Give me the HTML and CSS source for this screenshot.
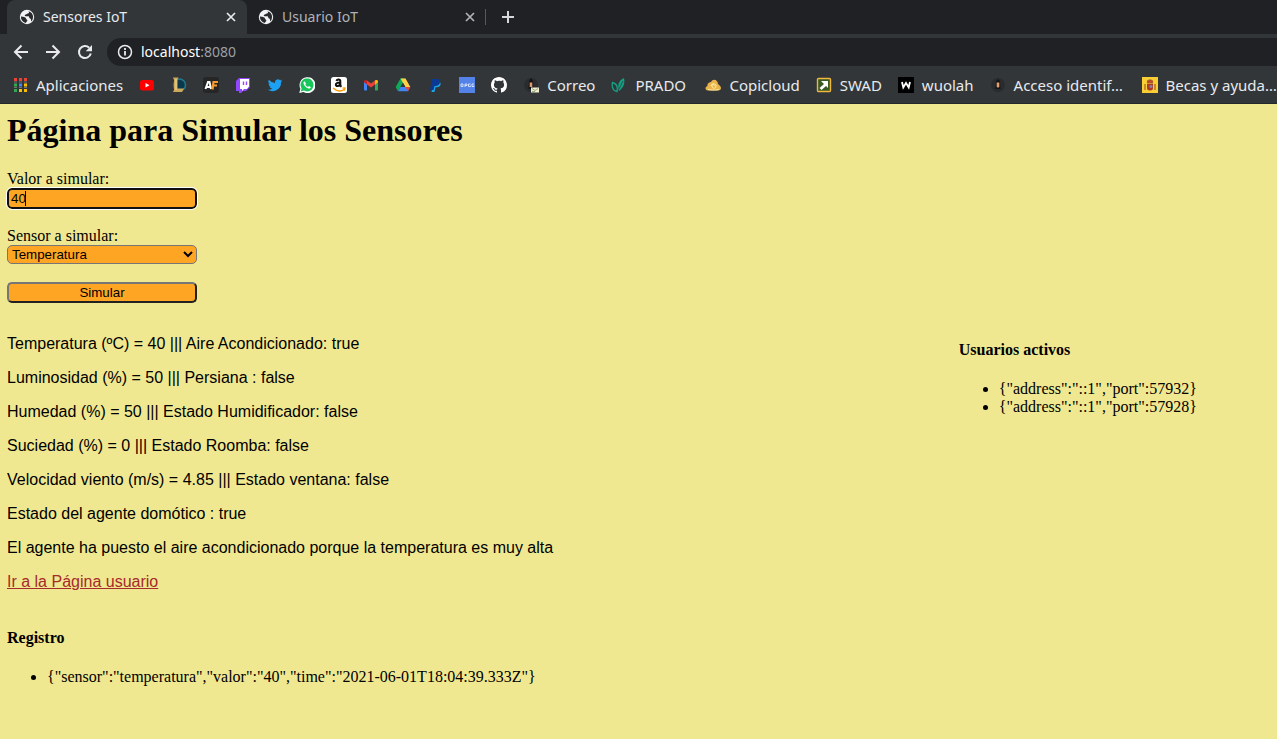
FILE: index.html
```html
<!DOCTYPE html>
<html lang="es">
<head>
<meta charset="utf-8">
<title>Sensores IoT</title>
<link rel="stylesheet" href="styles.css">
</head>
<body>
<svg class="defs" aria-hidden="true">
  <symbol id="globe" viewBox="0 0 16 16">
    <circle cx="8" cy="8" r="7.200" fill="#f1f3f4"/>
    <path d="M9.300 2.200C10.500 3 10.300 4.200 8.800 4.400 7.600 4.500 7.600 5.400 6.600 5.600 5.300 5.900 5.500 7.300 6.800 7.300H9C10 7.300 10.200 8 10.300 8.800 10.500 9.700 12 9.500 12 10.500V12.600A6.200 6.200 0 0 0 14.100 8 6.200 6.200 0 0 0 9.300 2.200zM1.900 7.600C3.600 7.900 6.800 8 7 9.500 7.100 10.700 8.600 10.400 8.300 11.700 8 12.800 7 12.700 7 14A6.200 6.200 0 0 1 1.900 7.600z" fill="#292a2d"/>
  </symbol>
  <symbol id="close" viewBox="0 0 16 16"><path d="M4 4l8 8M12 4l-8 8" fill="none" stroke="currentColor" stroke-width="1.700"/></symbol>
</svg>
<header class="browser">
  <nav class="tabs" aria-label="Pestañas">
    <div class="tab tab-active">
      <svg class="icon"><use href="#globe"/></svg>
      <span class="tab-title">Sensores IoT</span>
      <button class="tool" aria-label="Cerrar Sensores IoT"><svg class="icon"><use href="#close"/></svg></button>
    </div>
    <div class="tab">
      <svg class="icon"><use href="#globe"/></svg>
      <span class="tab-title">Usuario IoT</span>
      <button class="tool" aria-label="Cerrar Usuario IoT"><svg class="icon"><use href="#close"/></svg></button>
    </div>
    <button class="tool new-tab" aria-label="Nueva pestaña"><svg class="icon" viewBox="0 0 16 16"><path d="M8 2v12M2 8h12" stroke="currentColor" stroke-width="2"/></svg></button>
  </nav>
  <div class="toolbar">
    <button class="tool" aria-label="Atrás"><svg class="icon" viewBox="0 0 16 16"><path d="M15 8H2M8.500 1.500L2 8l6.500 6.500" fill="none" stroke="currentColor" stroke-width="2"/></svg></button>
    <button class="tool" aria-label="Adelante"><svg class="icon" viewBox="0 0 16 16"><path d="M1 8h13M7.500 1.500L14 8l-6.500 6.500" fill="none" stroke="currentColor" stroke-width="2"/></svg></button>
    <button class="tool" aria-label="Recargar"><svg class="icon" viewBox="0 0 16 16"><path d="M13.800 9.500A6 6 0 1 1 12.200 3.800" fill="none" stroke="currentColor" stroke-width="2"/><path d="M15 1v6.300H8.700z" fill="currentColor"/></svg></button>
    <div class="address">
      <svg class="icon" viewBox="0 0 16 16"><circle cx="8" cy="8" r="6.500" fill="none" stroke="currentColor" stroke-width="1.500"/><path d="M8 7v4.500M8 4v2" stroke="currentColor" stroke-width="1.800"/></svg>
      <span class="url">localhost<span class="port">:8080</span></span>
    </div>
  </div>
  <nav class="bookmarks" aria-label="Marcadores">
    <a class="bookmark" href="#">
      <svg class="icon" viewBox="0 0 16 16"><path d="M2 1h3v3H2zM7 1h3v3H7zM12 1h3v3h-3z" fill="#ea4335"/><path d="M2 6.500h3v3H2zM2 12h3v3H2z" fill="#34a853"/><path d="M7 6.500h3v3H7z" fill="#4285f4"/><path d="M12 6.500h3v3h-3zM7 12h3v3H7zM12 12h3v3h-3z" fill="#fbbc04"/><path d="M2 5h3M7 5h3M12 5h3M2 10.500h3M7 10.500h3M12 10.500h3" stroke="#9aa0a6" stroke-width=".6"/></svg>
      <span>Aplicaciones</span></a>
    <a class="bookmark" href="#" aria-label="YouTube"><svg class="icon" viewBox="0 0 16 16"><rect x="1" y="3" width="14" height="10.500" rx="2.500" fill="#f00"/><path d="M6.500 6v4.500l4-2.200z" fill="#fff"/></svg></a>
    <a class="bookmark" href="#" aria-label="League of Legends"><svg class="icon" viewBox="0 0 16 16"><circle cx="8.500" cy="8" r="6" fill="#0c394a" stroke="#227a8b" stroke-width="1.500"/><path d="M2 .5h5.500l-1 2v9H13l-2 3.500H2l1-2V3z" fill="#cda85b"/><path d="M5 2v11" stroke="#f0dc9b"/></svg></a>
    <a class="bookmark" href="#" aria-label="AF"><svg class="icon" viewBox="0 0 16 16"><rect width="16" height="16" rx="3" fill="#262626"/><path d="M2.500 12L5 5h1.500l1.500 7M3.500 10h4" fill="none" stroke="#fff" stroke-width="2"/><path d="M9.500 12.500L10.500 5H15M10 8.500h4" fill="none" stroke="#f89b2e" stroke-width="2.200"/></svg></a>
    <a class="bookmark" href="#" aria-label="Twitch"><svg class="icon" viewBox="0 0 16 16"><path d="M4 1h11v9l-4 4H8l-2 2H4v-2H1V4z" fill="#9146ff"/><path d="M5 2h9v7.500L12 12H9l-2 2v-2H5z" fill="#fff"/><path d="M8.500 4.500v3.500M11.500 4.500v3.500" stroke="#9146ff" stroke-width="1.400"/></svg></a>
    <a class="bookmark" href="#" aria-label="Twitter"><svg class="icon" viewBox="0 0 24 24"><path fill="#1da1f2" d="M23 5.500a9 9 0 0 1-2.500.7A4.500 4.500 0 0 0 22.400 3.800a9 9 0 0 1-2.800 1.100A4.500 4.500 0 0 0 12 9a12.500 12.500 0 0 1-9.200-4.700 4.500 4.500 0 0 0 1.400 6 4 4 0 0 1-2-.5 4.500 4.500 0 0 0 3.500 4.400 4 4 0 0 1-2 .1 4.500 4.500 0 0 0 4.200 3A9 9 0 0 1 1.300 19.200 12.800 12.800 0 0 0 21 7.800a9 9 0 0 0 2-2.300z"/></svg></a>
    <a class="bookmark" href="#" aria-label="WhatsApp"><svg class="icon" viewBox="0 0 16 16"><path d="M.3 16l1.100-4.200A8 8 0 1 1 4.400 15z" fill="#fff"/><path d="M1.800 14.500l.8-3A6.500 6.500 0 1 1 4.900 13.600z" fill="#16c65b"/><path d="M5.400 4.200c-.9.500-1.100 1.600-.7 2.700.8 2.200 2.400 3.700 4.700 4.500 1.100.3 2-.1 2.500-1.200L10 9.100l-1 .9C7.700 9.500 6.900 8.600 6.300 7.300L7.100 6.400z" fill="#fff"/></svg></a>
    <a class="bookmark" href="#" aria-label="Amazon"><svg class="icon" viewBox="0 0 16 16"><rect width="16" height="16" rx="2.500" fill="#fff"/><path d="M5.500 4C6 1.800 9.300 2 9.300 4v4c0 1 .7 1.300 1.200 1.800M9.300 5.500C3.500 5.300 4.300 9.200 6.500 9.100c2 0 2.800-1.500 2.800-3.600" fill="none" stroke="#111" stroke-width="2"/><path d="M2 11c4 3.500 8.500 3.500 11.500 1.200M11.500 11.200l2.500-.2-.7 2.500" fill="none" stroke="#ff9900" stroke-width="1.300"/></svg></a>
    <a class="bookmark" href="#" aria-label="Gmail"><svg class="icon" viewBox="0 0 16 16"><path d="M1 4h3v9.500H2q-1 0-1-1z" fill="#4285f4"/><path d="M12 4h3v8.500q0 1-1 1h-2z" fill="#34a853"/><path d="M4 3.500l4 3 4-3v4l-4 3-4-3z" fill="#ea4335"/><path d="M1 5c0-2 1.500-2.500 3-1.500v4L1 5.300z" fill="#c5221f"/><path d="M15 5c0-2-1.500-2.500-3-1.500v4l3-2.200z" fill="#fbbc04"/></svg></a>
    <a class="bookmark" href="#" aria-label="Drive"><svg class="icon" viewBox="0 0 16 16"><path d="M5.500 1.500h5L5.500 10 3 14.300.7 10z" fill="#0fa958"/><path d="M5.500 1.500h5l4.800 8.500h-5z" fill="#ffcf48"/><path d="M5.500 10h9.800L13 14.300H3z" fill="#4285f4"/><path d="M10.500 10h4.800L13 14.300z" fill="#ea4335"/><path d="M8 5.900l2.400 4.100H5.600z" fill="#323639"/></svg></a>
    <a class="bookmark" href="#" aria-label="PayPal"><svg class="icon" viewBox="0 0 16 16"><path d="M6.500 5h6.500c1.500 2.500 0 5-3 5.200H8.500L7.500 15H4.500z" fill="#1ba4e6"/><path d="M5 2h4.500c3.500 0 4.200 2 3.200 4.500-1 2.200-3 2.600-5.200 2.600L6.500 13H3z" fill="#0b3a94"/></svg></a>
    <a class="bookmark" href="#" aria-label="OP.GG"><svg class="icon" viewBox="0 0 16 16"><rect width="16" height="16" fill="#5383e8"/><path d="M2 7h2v2.500H2zM6 10V7h2v1.500H6M11.500 7H9.500v2.500h2v-1M15 7h-2v2.500h2v-1" fill="none" stroke="#dfe8fb" stroke-width=".9"/></svg></a>
    <a class="bookmark" href="#" aria-label="GitHub"><svg class="icon" viewBox="0 0 16 16"><path fill="#fff" d="M8 0C3.580 0 0 3.580 0 8c0 3.540 2.290 6.530 5.470 7.590.4.070.55-.17.55-.38 0-.19-.01-.82-.01-1.490-2.010.37-2.530-.49-2.690-.94-.09-.23-.48-.94-.82-1.130-.28-.15-.68-.52-.01-.53.63-.01 1.080.58 1.230.82.720 1.210 1.870.87 2.330.66.070-.52.280-.87.510-1.070-1.780-.2-3.640-.89-3.640-3.950 0-.87.310-1.590.82-2.150-.08-.2-.36-1.020.08-2.120 0 0 .67-.21 2.200.82A7.600 7.600 0 0 1 8 3.860c.68 0 1.360.09 2 .27 1.530-1.040 2.200-.82 2.200-.82.440 1.100.160 1.920.080 2.120.510.560.820 1.270.820 2.150 0 3.070-1.870 3.750-3.650 3.950.290.250.540.730.540 1.480 0 1.070-.01 1.930-.01 2.200 0 .210.150.460.550.380A8.010 8.010 0 0 0 16 8c0-4.420-3.580-8-8-8z"/></svg></a>
    <a class="bookmark" href="#"><svg class="icon" viewBox="0 0 16 16"><circle cx="8" cy="8" r="7" fill="#292c2e"/><path d="M5.500 12L6 4l2-3 2 3 .5 8z" fill="#141414"/><path d="M6.700 5.500h2.600v4.500H6.700z" fill="#e09870"/><path d="M8 10.500h8v5H8z" fill="#f4ead0"/><path d="M9 11.500l3 2 3-2M9 14.500h3" fill="none" stroke="#74a26b" stroke-width=".8"/></svg><span>Correo</span></a>
    <a class="bookmark bookmark-medium" href="#"><svg class="icon" viewBox="0 0 16 16"><path d="M1.500 5.500c4 1 5.500 4 4.500 9-4-1-5.500-4-4.500-9z" fill="none" stroke="#16a085" stroke-width="1.300"/><path d="M8 14C6 8 8 3 13 1c1 5 0 9-5 13z" fill="#12a184"/><path d="M8 12l4-8" stroke="#24564f"/></svg><span>PRADO</span></a>
    <a class="bookmark" href="#"><svg class="icon" viewBox="0 0 16 16"><path d="M3 13.500C0 13.500-.5 10 2.500 9 2 6 5 5 6 5c2-4 7-2 7 2 1 1 3 2 3 4 0 1.500-1 2.500-3 2.500z" fill="#eab44b"/><path d="M3 12.500c4 1 9 .5 11 0M6 9c0-3 5-3 5 0s-4 3-4 0 3-1 2 0" fill="none" stroke="#fff0ae" stroke-width=".9"/></svg><span>Copicloud</span></a>
    <a class="bookmark" href="#"><svg class="icon" viewBox="0 0 16 16"><rect x="1.500" y="1.500" width="13" height="13" rx="1" fill="#385924" stroke="#efb73e" stroke-width="1.400"/><path d="M5 4h7v7L10 9l-4.500 4-2-2L8 7z" fill="#fff"/></svg><span>SWAD</span></a>
    <a class="bookmark" href="#"><svg class="icon" viewBox="0 0 16 16"><path d="M0 0h16v16H0z" fill="#000"/><path d="M4 5l1.300 5.500L8 6l2.700 4.500L12 5" fill="none" stroke="#fff" stroke-width="1.800"/></svg><span>wuolah</span></a>
    <a class="bookmark bookmark-wide" href="#"><svg class="icon" viewBox="0 0 16 16"><circle cx="8" cy="8" r="7" fill="#292c2e"/><path d="M5.500 12L6 4l2-2 2 2 .5 8z" fill="#151515"/><path d="M6.700 5.500h2.600v4L8 11 6.700 9.500z" fill="#e4a071"/></svg><span>Acceso identif…</span></a>
    <a class="bookmark" href="#"><svg class="icon" viewBox="0 0 16 16"><path d="M0 0h16v16H0z" fill="#f9ce35"/><path d="M5 7h6v4q0 2.500-3 2.500T5 11z" fill="#ae3826"/><path d="M5.500 6V4L7 3h2l1.500 1v2zM3 7v6M13 7v6" fill="#c4412a" stroke="#a45c2b" stroke-width="1.200"/><circle cx="9" cy="9.500" r="1.500" fill="#8b80a8"/></svg><span>Becas y ayuda…</span></a>
  </nav>
</header>
<main class="page">
  <h1>Página para Simular los Sensores</h1>
  <form class="form">
    <div class="field">
      <label for="valor">Valor a simular:</label>
      <div class="entry"><input class="control value" id="valor" type="text" value="40"><span class="caret"></span></div>
    </div>
    <div class="field">
      <label for="sensor">Sensor a simular:</label>
      <select class="control select" id="sensor"><option>Temperatura</option></select>
    </div>
    <button class="control submit" type="button">Simular</button>
  </form>
  <div class="columns">
    <section class="status">
      <p>Temperatura (ºC) = 40 ||| Aire Acondicionado: true</p>
      <p>Luminosidad (%) = 50 ||| Persiana : false</p>
      <p>Humedad (%) = 50 ||| Estado Humidificador: false</p>
      <p>Suciedad (%) = 0 ||| Estado Roomba: false</p>
      <p>Velocidad viento (m/s) = 4.85 ||| Estado ventana: false</p>
      <p>Estado del agente domótico : true</p>
      <p>El agente ha puesto el aire acondicionado porque la temperatura es muy alta</p>
      <p><a class="link" href="#">Ir a la Página usuario</a></p>
    </section>
    <aside class="users">
      <h4>Usuarios activos</h4>
      <ul>
        <li>{"address":"::1","port":57932}</li>
        <li>{"address":"::1","port":57928}</li>
      </ul>
    </aside>
  </div>
  <section class="log">
    <h4>Registro</h4>
    <ul><li>{"sensor":"temperatura","valor":"40","time":"2021-06-01T18:04:39.333Z"}</li></ul>
  </section>
</main>
</body>
</html>
```
FILE: styles.css
```css
* { box-sizing: border-box; }
body {
  margin: 0;
  min-height: 100vh;
  background: #f0e891;
  color: #000;
  font: 16px/18px "Liberation Serif", serif;
}
.defs { position: absolute; width: 0; height: 0; }
.browser {
  background: #323639;
  color: #e8eaed;
  font: 14px/20px "Noto Sans", sans-serif;
  overflow: hidden;
  border-bottom: 1px solid #25282a;
}
.icon { display: block; width: 16px; height: 16px; flex: none; }
.tool {
  display: block;
  padding: 0;
  border: 0;
  background: none;
  color: inherit;
}
.tabs {
  display: flex;
  align-items: center;
  height: 34px;
  padding-left: 7px;
  background: #202124;
}
.tab {
  display: flex;
  align-items: center;
  gap: 8px;
  width: 238px;
  height: 34px;
  padding: 0 7px 0 11px;
  color: #b0b3b8;
}
.tab-active {
  width: 240px;
  padding: 0 8px 0 12px;
  border-radius: 8px 8px 0 0;
  background: #323639;
  color: #e8eaed;
}
.tab-title { flex: 1; }
.new-tab { padding-left: 14px; border-left: 1px solid #56595d; color: #d5d7da; }
.toolbar {
  display: flex;
  align-items: center;
  gap: 16px;
  padding: 4px 0 0 13px;
}
.address {
  display: flex;
  flex: 1;
  align-items: center;
  gap: 8px;
  height: 28px;
  margin-left: -2px;
  padding-left: 10px;
  border-radius: 14px 0 0 14px;
  background: #202124;
}
.url { color: #fff; }
.port { color: #9aa0a6; }
.bookmarks {
  display: flex;
  gap: 16px;
  height: 37px;
  padding-left: 12px;
  align-items: center;
  font-size: 15px;
}
.bookmark {
  display: flex;
  flex: none;
  align-items: center;
  gap: 8px;
  color: inherit;
  text-decoration: none;
  white-space: nowrap;
}
.bookmark-medium { min-width: 78px; }
.bookmark-wide { min-width: 136px; }
.page { padding: 8px 1px 8px 7px; }
h1 { margin: 0 0 21px; font-size: 32px; line-height: 37px; }
.form { display: grid; gap: 18px; width: 190px; }
.field { display: grid; }
.entry { position: relative; display: grid; }
.control {
  width: 100%;
  margin: 0;
  border-radius: 5px;
  background: #ffa524;
  color: #000;
  font-family: "Liberation Sans", sans-serif;
}
.value {
  height: 21px;
  padding: 1px 2px;
  border: 2px solid #101010;
  outline: 1px solid #fff;
}
.caret {
  position: absolute;
  top: 3px;
  left: 18px;
  width: 1px;
  height: 15px;
  background: #000;
}
.select { height: 19px; border: 1px solid #767676; }
.submit { height: 21px; padding: 0; border: 2px outset #767676; }
.columns { display: grid; grid-template-columns: 3fr 1fr; padding-top: 32px; }
.status { display: grid; gap: 16px; align-content: start; font-family: "Liberation Sans", sans-serif; }
.status p { margin: 0; }
.link { color: #a52a2a; }
h4 { margin: 0 0 21px; font-size: 16px; }
ul { margin: 0; padding-left: 40px; }
.users { padding-top: 6px; }
.log { padding-top: 38px; }
```
